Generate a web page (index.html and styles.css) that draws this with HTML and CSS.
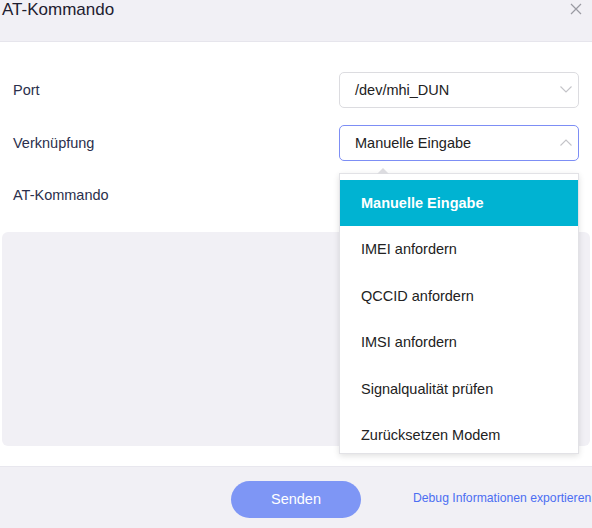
FILE: index.html
```html
<!DOCTYPE html>
<html lang="de">
<head>
<meta charset="utf-8">
<title>AT-Kommando</title>
<link rel="stylesheet" href="styles.css">
</head>
<body>
<div class="dialog">
  <div class="header">
    <div class="title">AT-Kommando</div>
    <svg class="close" width="12" height="12" viewBox="0 0 12 12"><path d="M1 1L11 11M11 1L1 11" stroke="#9a9aa2" stroke-width="1.2" fill="none"/></svg>
  </div>
  <div class="body">
    <div class="row">
      <div class="label">Port</div>
      <div class="select">
        <span>/dev/mhi_DUN</span>
        <svg class="chev" width="12" height="7" viewBox="0 0 12 7"><path d="M0.5 0.5L6 6L11.5 0.5" stroke="#c4c4c8" stroke-width="1.1" fill="none"/></svg>
      </div>
    </div>
    <div class="row">
      <div class="label">Verknüpfung</div>
      <div class="select focused">
        <span>Manuelle Eingabe</span>
        <svg class="chev" width="12" height="7" viewBox="0 0 12 7"><path d="M0.5 6.5L6 1L11.5 6.5" stroke="#c4c4c8" stroke-width="1.1" fill="none"/></svg>
        <div class="menu">
          <div class="arrow"></div>
          <div class="item active">Manuelle Eingabe</div>
          <div class="item">IMEI anfordern</div>
          <div class="item">QCCID anfordern</div>
          <div class="item">IMSI anfordern</div>
          <div class="item">Signalqualität prüfen</div>
          <div class="item">Zurücksetzen Modem</div>
        </div>
      </div>
    </div>
    <div class="row">
      <div class="label">AT-Kommando</div>
    </div>
    <div class="textarea"></div>
  </div>
  <div class="footer">
    <button class="send">Senden</button>
    <a class="link">Debug Informationen exportieren</a>
  </div>
</div>
</body>
</html>
```

FILE: styles.css
```css
* { box-sizing: border-box; }
html, body { margin: 0; padding: 0; }
body {
  width: 592px;
  height: 528px;
  overflow: hidden;
  background: #ffffff;
  font-family: "Liberation Sans", Arial, sans-serif;
}
.dialog {
  display: flex;
  flex-direction: column;
  height: 528px;
}
.header {
  height: 42px;
  background: #f1f0f5;
  border-bottom: 1px solid #e6e5ec;
  display: flex;
  justify-content: space-between;
  align-items: flex-start;
  padding: 0 10px 0 2px;
}
.title {
  font-size: 17px;
  line-height: 19px;
  color: #1e2030;
}
.close { margin-top: 3px; }
.body {
  flex: 1;
  padding: 30px 0 20px;
  display: flex;
  flex-direction: column;
}
.row {
  display: flex;
  justify-content: space-between;
  align-items: center;
  height: 36px;
  padding: 0 13px;
  margin-bottom: 16px;
}
.row:first-child { margin-bottom: 17px; }
.label {
  font-size: 14.5px;
  color: #2b2f4c;
}
.select {
  position: relative;
  width: 240px;
  height: 36px;
  border: 1px solid #dcdce0;
  border-radius: 5px;
  display: flex;
  align-items: center;
  justify-content: space-between;
  padding: 0 6px 0 15px;
  font-size: 14.5px;
  color: #222;
  background: #fff;
}
.select.focused { border-color: #7d8ef5; }
.chev { margin-right: 0; }
.menu {
  position: absolute;
  left: -1px;
  top: 47px;
  width: 240px;
  height: 281px;
  background: #fff;
  border: 1px solid #e2e2e6;
  box-shadow: 0 2px 6px rgba(0,0,0,0.12);
  padding-top: 6px;
  z-index: 5;
}
.arrow {
  position: absolute;
  top: -6px;
  left: 37px;
  width: 0;
  height: 0;
  border-left: 6px solid transparent;
  border-right: 6px solid transparent;
  border-bottom: 6px solid #dcdce0;
}
.item {
  height: 46.5px;
  display: flex;
  align-items: center;
  padding-left: 21px;
  font-size: 14.5px;
  color: #222;
  overflow: hidden;
}
.item.active {
  background: #00b3d2;
  color: #fff;
  font-weight: bold;
}
.textarea {
  margin: 3px 2px 0;
  height: 214px;
  background: #f1f0f5;
  border-radius: 6px;
}
.footer {
  height: 63px;
  background: #f1f0f5;
  border-top: 1px solid #e8e7ee;
  display: flex;
  align-items: flex-start;
  padding: 14px 0 0 231px;
}
.send {
  width: 130px;
  height: 37px;
  border: none;
  border-radius: 19px;
  background: #7e96f5;
  color: #fff;
  font-family: "Liberation Sans", Arial, sans-serif;
  font-size: 14.5px;
  padding: 0;
}
.link {
  margin-left: 52px;
  margin-top: 10px;
  font-size: 12.2px;
  color: #4c6ef2;
  white-space: nowrap;
}
```
